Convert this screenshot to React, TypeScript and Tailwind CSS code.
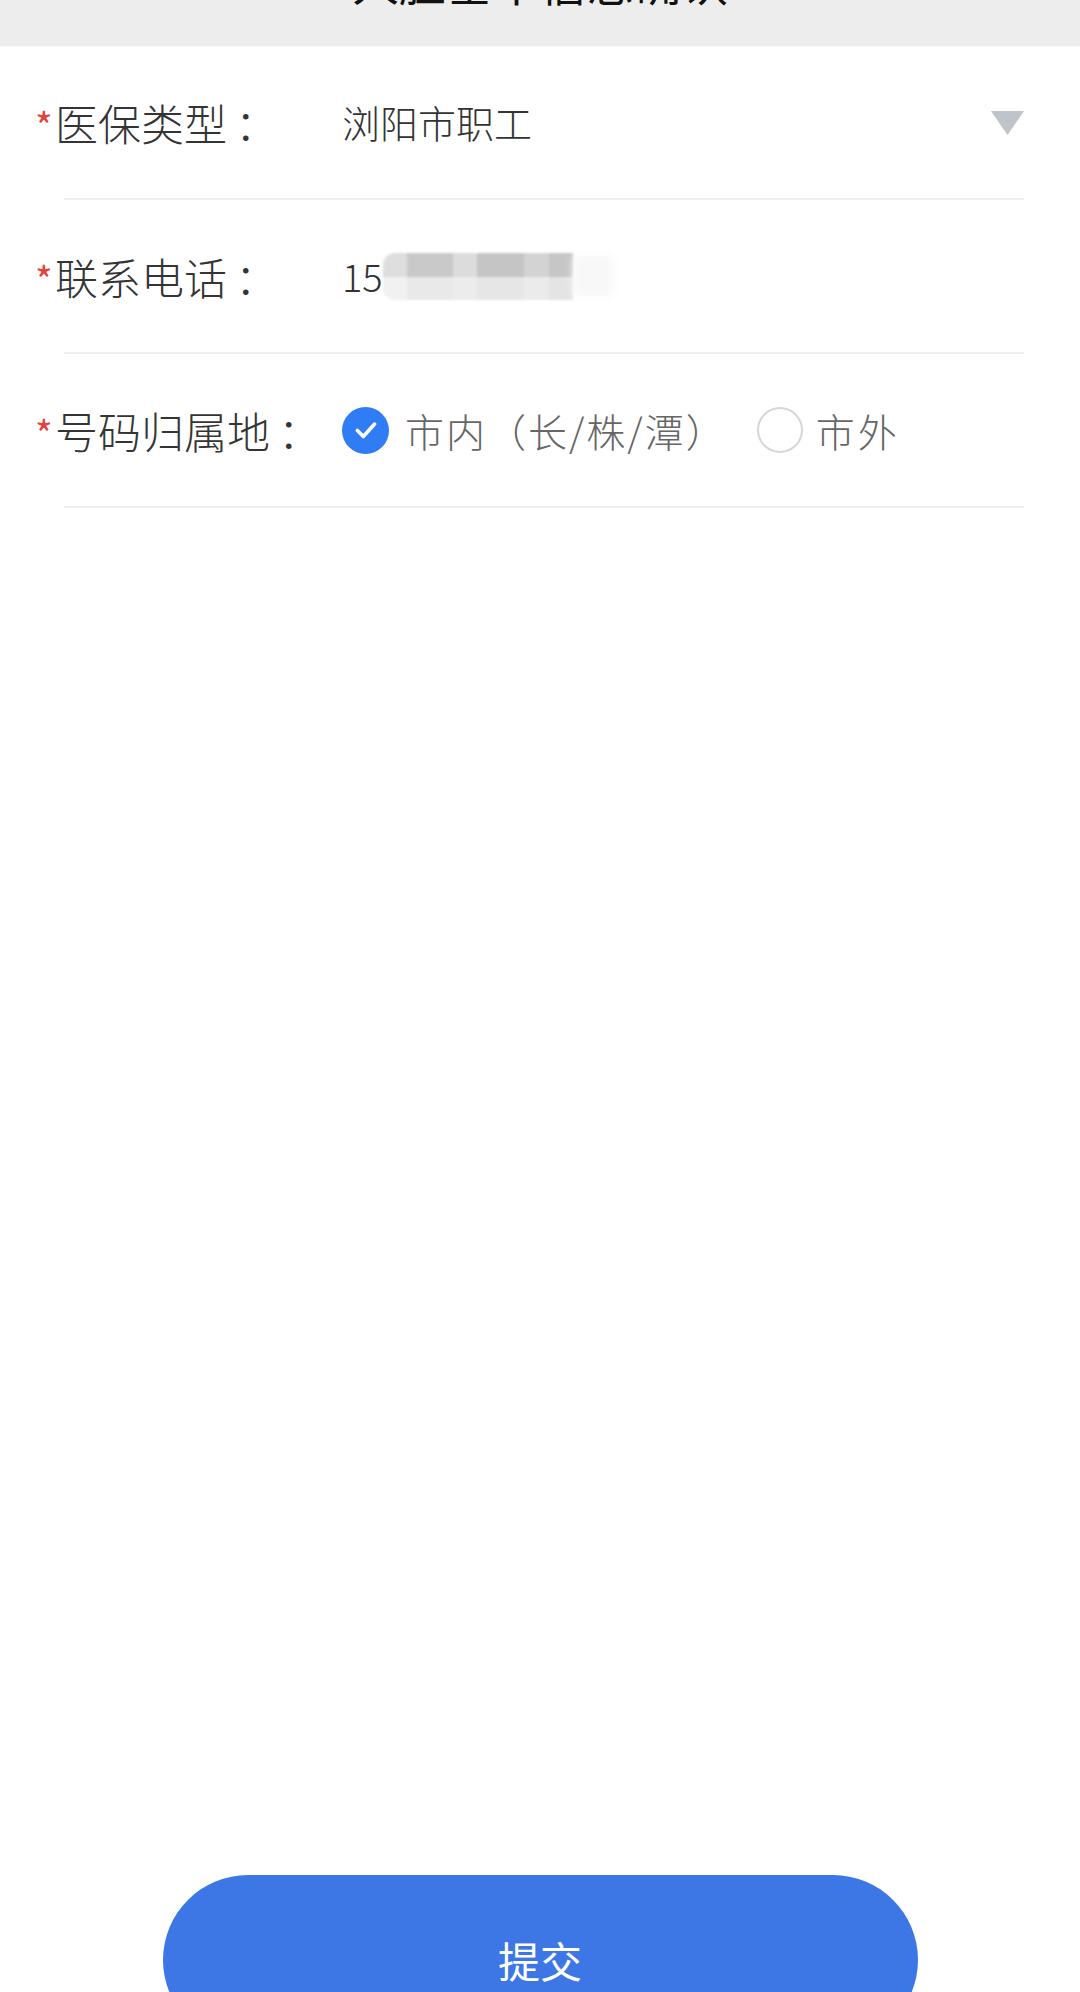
import React from "react";

const font = { fontFamily: '"Noto Sans CJK SC", "Noto Sans", sans-serif' };

function Asterisk() {
  return (
    <span className="w-[20px] text-[38px] leading-none text-[#e0443c] translate-y-[3px]">*</span>
  );
}

function Row({ label, children }: { label: string; children: React.ReactNode }) {
  return (
    <div className="flex flex-col">
      <div className="h-[152px] flex items-center pl-[35px] pr-[56px]">
        <div className="w-[307px] flex items-center shrink-0">
          <Asterisk />
          <span className="text-[43px] leading-none font-light text-[#343434]">{label}</span>
          <span className="ml-[8px] text-[43px] leading-none font-light text-[#343434]">：</span>
        </div>
        <div className="flex-1 flex items-center">{children}</div>
      </div>
      <div className="ml-[64px] w-[960px] h-[2px] bg-[#efefef]" />
    </div>
  );
}

export default function App() {
  return (
    <div className="w-[1080px] h-[1992px] bg-white overflow-hidden flex flex-col" style={font}>
      <div className="h-[46px] bg-[#ededed] overflow-hidden flex justify-center shadow-[0_1px_2px_rgba(0,0,0,0.04)]">
        <div className="-mt-[43px] text-[47px] leading-[47px] text-[#111]">人脸基本信息确认</div>
      </div>

      <Row label="医保类型">
        <span className="text-[38px] leading-none font-light text-[#333333]">浏阳市职工</span>
        <div className="ml-auto">
          <svg width="33" height="25" viewBox="0 0 33 25">
            <path d="M0 1 H33 L16.5 25 Z" fill="#bfc3ca" />
          </svg>
        </div>
      </Row>

      <Row label="联系电话">
        <span className="text-[38px] leading-none font-light text-[#333333]">15</span>
        <div className="flex flex-col blur-[1px]">
          <div className="flex h-[24px]">
            <div className="w-[24px] bg-[#dedede] rounded-tl-[12px]" />
            <div className="w-[46px] bg-[#c9c9c9]" />
            <div className="w-[24px] bg-[#dcdcdc]" />
            <div className="w-[47px] bg-[#c5c5c5]" />
            <div className="w-[25px] bg-[#d3d3d3]" />
            <div className="w-[24px] bg-[#c6c6c6]" />
          </div>
          <div className="flex h-[23px]">
            <div className="w-[24px] bg-[#f1f1f1] rounded-bl-[12px]" />
            <div className="w-[46px] bg-[#e9e9e9]" />
            <div className="w-[24px] bg-[#ececec]" />
            <div className="w-[47px] bg-[#e6e6e6]" />
            <div className="w-[25px] bg-[#ebebeb]" />
            <div className="w-[24px] bg-[#e4e4e4]" />
          </div>
        </div>
        <div className="w-[40px] h-[40px] bg-[#f8f8f8] blur-[4px]" />
      </Row>

      <Row label="号码归属地">
        <div className="flex items-center">
          <div className="w-[47px] h-[47px] rounded-full bg-[#2f7cf5] flex items-center justify-center">
            <svg width="28" height="28" viewBox="0 0 26 26">
              <path d="M5 13.5 L10.5 19 L21 7.5" fill="none" stroke="white" strokeWidth="3.4" strokeLinecap="round" strokeLinejoin="round" />
            </svg>
          </div>
          <span className="ml-[16px] text-[39px] leading-none font-light tracking-[2px] text-[#666666]">市内（长/株/潭）</span>
          <div className="ml-[30px] w-[46px] h-[46px] rounded-full border-[2px] border-[#d6d6d6]" />
          <span className="ml-[13px] text-[39px] leading-none font-light tracking-[3px] text-[#666666]">市外</span>
        </div>
      </Row>

      <div className="flex-1" />

      <div className="flex justify-center -mb-[53px]">
        <button className="w-[755px] h-[170px] rounded-full bg-[#3d77e5] text-white text-[42px] leading-none flex items-center justify-center">
          提交
        </button>
      </div>
    </div>
  );
}
